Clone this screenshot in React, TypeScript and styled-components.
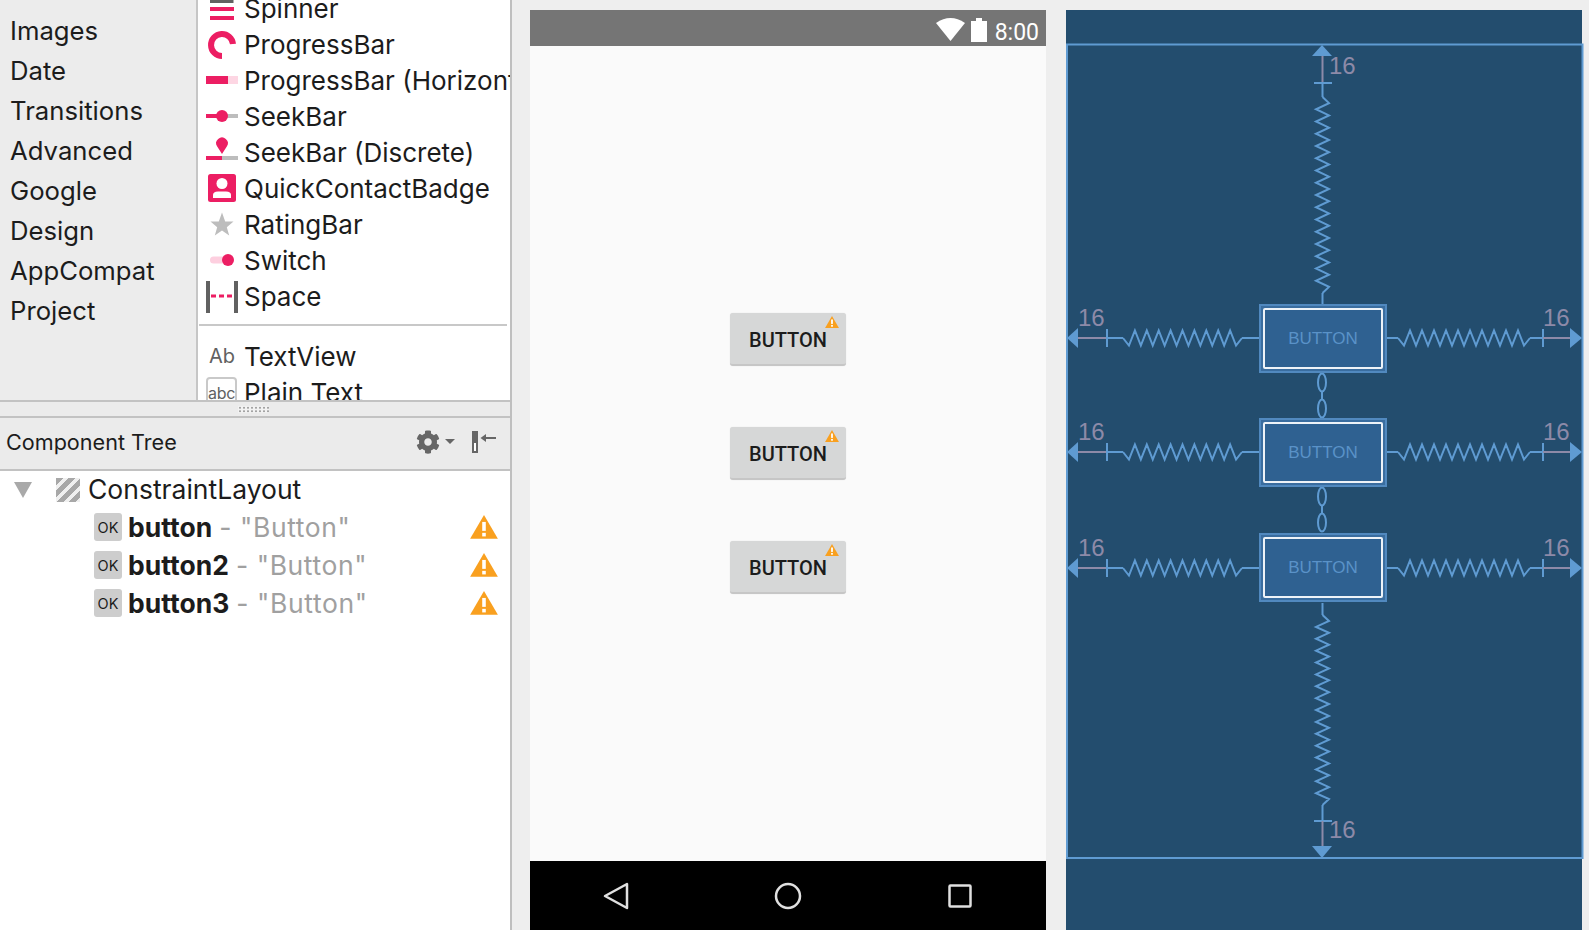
import styled, { createGlobalStyle } from 'styled-components';
import { FaCog } from 'react-icons/fa';

const PINK = '#ec1e63';
const LINE = '#5f9bd2';
const DIM = '#8d8aa8';

const GlobalStyle = createGlobalStyle`
  html, body {
    margin: 0;
    height: 100%;
    overflow: hidden;
    background: #eeeeee;
  }
`;

const Page = styled.div`
  display: flex;
  width: 1589px;
  height: 930px;
  background: #eeeeee;
  font-family: Inter, "Liberation Sans", sans-serif;
  color: #1c1c1c;
`;

const LeftPane = styled.div`
  display: flex;
  flex-direction: column;
  width: 510px;
  flex: none;
  border-right: 2px solid #bfbfbf;
  background: #fff;
`;

const PaletteArea = styled.div`
  display: flex;
  height: 400px;
  flex: none;
  overflow: hidden;
`;

const Categories = styled.div`
  width: 196px;
  flex: none;
  margin-top: -29px;
  background: #ececec;
  border-right: 2px solid #c6c6c6;
`;

const Category = styled.div`
  box-sizing: border-box;
  display: flex;
  align-items: center;
  height: 40px;
  padding: 0 0 2px 10px;
  font-size: 25.7px;
  white-space: nowrap;
`;

const Palette = styled.div`
  flex: 1;
  min-width: 0;
  margin-top: -9px;
  background: #fff;
  overflow: hidden;
`;

const PaletteRow = styled.div`
  box-sizing: border-box;
  display: flex;
  align-items: center;
  gap: 6px;
  height: 36px;
  padding: 0 0 2px 8px;
  font-size: 26px;
  white-space: nowrap;
`;

const PaletteRule = styled.div`
  height: 2px;
  margin: 9px 3px 13px 1px;
  background: #c8c8c8;
`;

const IconBox = styled.svg`
  width: 32px;
  height: 32px;
  flex: none;
  margin-top: 2px;
  overflow: visible;
`;

const AbIcon = styled.span`
  width: 32px;
  flex: none;
  margin-top: -1px;
  text-align: center;
  font-size: 20px;
  color: #616161;
`;

const AbcIcon = styled.span`
  box-sizing: border-box;
  width: 31px;
  height: 32px;
  margin: 2px 1px 0 0;
  flex: none;
  display: flex;
  align-items: center;
  justify-content: center;
  border: 2px solid #c9c9c9;
  border-radius: 4px;
  font-size: 16px;
  letter-spacing: -0.3px;
  color: #616161;
`;

const Splitter = styled.div`
  display: flex;
  justify-content: center;
  align-items: center;
  height: 14px;
  flex: none;
  background: #ebebeb;
  border-top: 2px solid #c2c2c2;
  border-bottom: 2px solid #c2c2c2;
`;

const Grip = styled.span`
  width: 31px;
  height: 7px;
  margin-right: 4px;
  background-color: #f2f2f2;
  background-image: radial-gradient(#a4a4a4 0.8px, transparent 1px);
  background-size: 4px 3.5px;
`;

const TreeHeader = styled.div`
  display: flex;
  align-items: center;
  box-sizing: content-box;
  height: 47px;
  flex: none;
  padding: 0 12px 4px 6px;
  background: #ebebeb;
  border-bottom: 2px solid #c2c2c2;
  font-size: 21.6px;
`;

const TreeTitle = styled.span`
  flex: 1;
`;

const GearButton = styled.span`
  display: flex;
  align-items: center;
  gap: 5px;
  margin-right: 17px;
  color: #666;
`;

const Caret = styled.span`
  width: 0;
  height: 0;
  border-left: 5px solid transparent;
  border-right: 5px solid transparent;
  border-top: 5px solid #666;
`;

const Tree = styled.div`
  flex: 1;
  padding-top: 2px;
  background: #fff;
`;

const RootRow = styled.div`
  box-sizing: border-box;
  display: flex;
  align-items: center;
  height: 34px;
  margin-bottom: 1px;
  padding: 0 0 2px 14px;
  font-size: 26.5px;
`;

const Expander = styled.span`
  width: 0;
  height: 0;
  margin: 2px 24px 0 0;
  border-left: 9px solid transparent;
  border-right: 9px solid transparent;
  border-top: 16px solid #a9a9a9;
`;

const Hatch = styled.span`
  width: 24px;
  height: 24px;
  margin: 2px 8px 0 0;
  background: repeating-linear-gradient(135deg, #a8a8a8 0 5px, #f0f0f0 5px 8.5px);
`;

const ComponentRow = styled.div`
  display: flex;
  align-items: center;
  height: 38px;
  padding: 0 12px 0 94px;
  font-size: 26.5px;
`;

const OkBadge = styled.span`
  display: flex;
  align-items: center;
  justify-content: center;
  width: 28px;
  height: 28px;
  margin-right: 6px;
  border-radius: 3px;
  background: #cdcdcd;
  font-size: 14.5px;
`;

const ComponentName = styled.span`
  font-weight: 700;
`;

const ComponentHint = styled.span`
  margin-left: 7px;
  letter-spacing: 0.6px;
  white-space: pre;
  color: #a0a0a0;
`;

const WarnSlot = styled.span`
  display: flex;
  margin-left: auto;
`;

const PhonePane = styled.div`
  display: flex;
  flex-direction: column;
  width: 516px;
  height: 920px;
  flex: none;
  margin: 10px 0 0 18px;
  background: #fafafa;
`;

const StatusBar = styled.div`
  display: flex;
  align-items: center;
  justify-content: flex-end;
  height: 36px;
  padding-right: 7px;
  background: #757575;
  color: #fff;
  font-family: Roboto, sans-serif;
  font-size: 23px;
`;

const WifiIcon = styled.svg`
  margin: 2px 6px 0 0;
`;

const BatteryIcon = styled.svg`
  margin: 4px 8px 0 0;
`;

const StatusTime = styled.span`
  margin-top: 9px;
`;

const Screen = styled.div`
  flex: 1;
  display: flex;
  flex-direction: column;
  align-items: center;
  justify-content: center;
  gap: 61px;
`;

const AndroidButton = styled.div`
  position: relative;
  box-sizing: border-box;
  display: flex;
  align-items: center;
  justify-content: center;
  width: 116px;
  height: 53px;
  padding-top: 2px;
  border-radius: 3px;
  border-bottom: 2px solid #c6c6c6;
  background: #d6d7d7;
  box-shadow: 0 0 1px #d8d8d8;
  font-family: Roboto, sans-serif;
  font-weight: 500;
  font-size: 20px;
  color: #1c1c1c;
`;

const ButtonWarning = styled.span`
  position: absolute;
  top: 3px;
  right: 7px;
  display: flex;
`;

const NavBar = styled.div`
  display: grid;
  grid-template-columns: repeat(3, 172px);
  align-items: center;
  justify-items: center;
  height: 69px;
  background: #000;
`;

const BlueprintPane = styled.div`
  position: relative;
  width: 516px;
  height: 920px;
  flex: none;
  margin: 10px 0 0 20px;
  background: #234d6e;
`;

const BlueprintLines = styled.svg`
  position: absolute;
  inset: 0;
  width: 517px;
  height: 920px;
  overflow: visible;
`;

const BlueprintNode = styled.div<{ $top: number }>`
  position: absolute;
  top: ${p => p.$top}px;
  left: 193px;
  box-sizing: border-box;
  display: flex;
  width: 128px;
  height: 69px;
  padding: 2px;
  border: 2px solid #5189bf;
  background: #3a6d9f;
`;

const BlueprintFace = styled.div`
  flex: 1;
  display: flex;
  align-items: center;
  justify-content: center;
  border: 2px solid #eef3f8;
  border-radius: 2px;
  background: #2f6191;
  font-family: "Liberation Sans", sans-serif;
  font-size: 17px;
  color: #5a92c8;
`;

const DimLabel = styled.span<{ $x: number; $y: number }>`
  position: absolute;
  left: ${p => p.$x}px;
  top: ${p => p.$y}px;
  font-family: "Liberation Sans", sans-serif;
  font-size: 24px;
  line-height: 24px;
  color: ${DIM};
`;

const zigzag = (from: number, to: number, cross: number, periods: number, amp: number, vertical: boolean) => {
  const pts: string[] = [];
  const step = (to - from) / (periods * 2);
  for (let i = 0; i <= periods * 2; i++) {
    const along = from + step * i;
    let off = 0;
    if (i > 0 && i < periods * 2) off = i % 2 ? amp : -amp;
    pts.push(vertical ? `${cross + off},${along}` : `${along},${cross + off}`);
  }
  return pts.join(' ');
};

const Warning = ({ size }: { size: number }) => (
  <svg width={size} height={size * 0.85} viewBox="0 0 28 24">
    <path d="M14 0 L28 24 L0 24 Z" fill="#f9a01f" />
    <rect x="12.2" y="7" width="3.6" height="9" fill="#fff" />
    <rect x="12.2" y="18" width="3.6" height="3.6" fill="#fff" />
  </svg>
);

const SpinnerIcon = () => (
  <IconBox viewBox="0 0 32 32">
    <path d="M4 8.5 H26 V5" fill="none" stroke="#616161" strokeWidth="3" />
    <rect x="4" y="14" width="24" height="4" fill={PINK} />
    <rect x="4" y="23" width="24" height="4" fill={PINK} />
  </IconBox>
);

const ProgressIcon = () => (
  <IconBox viewBox="0 0 32 32">
    <path d="M27 15 A11 11 0 1 0 16 27" fill="none" stroke={PINK} strokeWidth="6" />
  </IconBox>
);

const HorizontalIcon = () => (
  <IconBox viewBox="0 0 32 32">
    <rect x="0" y="11" width="22" height="8" fill={PINK} />
    <rect x="22" y="11" width="10" height="8" fill="#fdd6e3" />
  </IconBox>
);

const SeekIcon = () => (
  <IconBox viewBox="0 0 32 32">
    <rect x="0" y="13" width="16" height="4" fill={PINK} />
    <rect x="16" y="13" width="16" height="4" fill="#bdbdbd" />
    <circle cx="16" cy="15" r="6" fill={PINK} />
  </IconBox>
);

const DiscreteIcon = () => (
  <IconBox viewBox="0 0 32 32">
    <rect x="0" y="19" width="16" height="4" fill={PINK} />
    <rect x="16" y="19" width="16" height="4" fill="#bdbdbd" />
    <path d="M16 17 L11.2 9.5 A5.8 5.8 0 1 1 20.8 9.5 Z" fill={PINK} />
  </IconBox>
);

const BadgeIcon = () => (
  <IconBox viewBox="0 0 32 32">
    <rect x="2" y="1" width="28" height="28" rx="2.5" fill={PINK} />
    <circle cx="16" cy="10.5" r="5.5" fill="#fff" />
    <path d="M7 25 V22 Q7 18.5 12 18.5 H20 Q25 18.5 25 22 V25 Z" fill="#fff" />
  </IconBox>
);

const StarIcon = () => (
  <IconBox viewBox="0 0 32 32">
    <path d="M16 3.5 L19.2 12.6 L27.5 12.6 L20.8 18.3 L23.2 26.5 L16 21.6 L8.8 26.5 L11.2 18.3 L4.5 12.6 L12.8 12.6 Z" fill="#bdbdbd" />
  </IconBox>
);

const SwitchIcon = () => (
  <IconBox viewBox="0 0 32 32">
    <rect x="4" y="11.5" width="22" height="7" rx="3.5" fill="#fdcfdf" />
    <circle cx="22" cy="15" r="6" fill={PINK} />
  </IconBox>
);

const SpaceIcon = () => (
  <IconBox viewBox="0 0 32 32">
    <rect x="0" y="0" width="4" height="32" fill="#616161" />
    <rect x="28" y="0" width="4" height="32" fill="#616161" />
    <path d="M5 15 H27" stroke={PINK} strokeWidth="3" strokeDasharray="5 3" />
  </IconBox>
);

const CollapseIcon = () => (
  <svg width="26" height="24" viewBox="0 0 26 24">
    <rect x="0" y="1" width="6" height="22" fill="#666" />
    <rect x="2" y="13" width="2" height="8" fill="#fff" />
    <path d="M8.5 8 L14 4 V7 H24 V9 H14 V12 Z" fill="#666" />
  </svg>
);

const paletteItems = [
  { label: 'Spinner', icon: <SpinnerIcon /> },
  { label: 'ProgressBar', icon: <ProgressIcon /> },
  { label: 'ProgressBar (Horizontal)', icon: <HorizontalIcon /> },
  { label: 'SeekBar', icon: <SeekIcon /> },
  { label: 'SeekBar (Discrete)', icon: <DiscreteIcon /> },
  { label: 'QuickContactBadge', icon: <BadgeIcon /> },
  { label: 'RatingBar', icon: <StarIcon /> },
  { label: 'Switch', icon: <SwitchIcon /> },
  { label: 'Space', icon: <SpaceIcon /> },
];

const categories = ['Containers', 'Images', 'Date', 'Transitions', 'Advanced', 'Google', 'Design', 'AppCompat', 'Project'];
const treeButtons = ['button', 'button2', 'button3'];

// page coordinates minus pane origin (1066, 10)
const rows = [
  { center: 328, nodeTop: 294, labelTop: 296 },
  { center: 442, nodeTop: 408, labelTop: 410 },
  { center: 558, nodeTop: 523, labelTop: 526 },
];

const Blueprint = () => (
  <BlueprintPane>
    <BlueprintLines viewBox="0 0 517 920">
      <rect x="1" y="34.5" width="515.5" height="813.5" fill="none" stroke={LINE} strokeWidth="2" />

      <path d="M256.5 46 V73" stroke={DIM} strokeWidth="2" />
      <path d="M248 73 H266 M256.5 73 V87" stroke={LINE} strokeWidth="2" fill="none" />
      <polygon points="256,35 246,46 266,46" fill={LINE} />
      <polyline points={zigzag(87, 283, 256.5, 16, 6.5, true)} fill="none" stroke={LINE} strokeWidth="2" />
      <path d="M256.5 283 V294" stroke={LINE} strokeWidth="2" />

      <path d="M256.5 593 V605" stroke={LINE} strokeWidth="2" />
      <polyline points={zigzag(605, 795, 256.5, 16, 6.5, true)} fill="none" stroke={LINE} strokeWidth="2" />
      <path d="M256.5 795 V811 M248 811 H266" stroke={LINE} strokeWidth="2" fill="none" />
      <path d="M256.5 811 V836" stroke={DIM} strokeWidth="2" />
      <polygon points="256,848 246,836 266,836" fill={LINE} />

      {[363, 477].map(y => (
        <g key={y} fill="none" stroke={LINE} strokeWidth="2">
          <ellipse cx="256" cy={y + 9.5} rx="4" ry="9" />
          <ellipse cx="256" cy={y + 35.5} rx="4" ry="9" />
          <path d={`M256 ${y + 18} V${y + 27}`} />
        </g>
      ))}

      {rows.map(r => (
        <g key={r.center}>
          <path d={`M12 ${r.center} H41`} stroke={DIM} strokeWidth="2" />
          <path d={`M41 ${r.center - 9} V${r.center + 9} M41 ${r.center} H57`} stroke={LINE} strokeWidth="2" fill="none" />
          <polygon points={`1,${r.center} 12,${r.center - 10} 12,${r.center + 10}`} fill={LINE} />
          <polyline points={zigzag(57, 176, r.center, 10, 7.5, false)} fill="none" stroke={LINE} strokeWidth="2" />
          <path d={`M176 ${r.center} H193 M321 ${r.center} H332`} stroke={LINE} strokeWidth="2" fill="none" />
          <polyline points={zigzag(332, 464, r.center, 11, 7.5, false)} fill="none" stroke={LINE} strokeWidth="2" />
          <path d={`M464 ${r.center} H477 M477 ${r.center - 9} V${r.center + 9}`} stroke={LINE} strokeWidth="2" fill="none" />
          <path d={`M477 ${r.center} H504`} stroke={DIM} strokeWidth="2" />
          <polygon points={`516,${r.center} 504,${r.center - 10} 504,${r.center + 10}`} fill={LINE} />
        </g>
      ))}
    </BlueprintLines>

    {rows.map(r => (
      <BlueprintNode key={r.nodeTop} $top={r.nodeTop}>
        <BlueprintFace>BUTTON</BlueprintFace>
      </BlueprintNode>
    ))}

    <DimLabel $x={263} $y={44}>16</DimLabel>
    <DimLabel $x={263} $y={808}>16</DimLabel>
    {rows.map(r => (
      <span key={r.labelTop}>
        <DimLabel $x={12} $y={r.labelTop}>16</DimLabel>
        <DimLabel $x={477} $y={r.labelTop}>16</DimLabel>
      </span>
    ))}
  </BlueprintPane>
);

const App = () => (
  <>
    <GlobalStyle />
    <Page>
      <LeftPane>
        <PaletteArea>
          <Categories>
            {categories.map(c => (
              <Category key={c}>{c}</Category>
            ))}
          </Categories>
          <Palette>
            {paletteItems.map(item => (
              <PaletteRow key={item.label}>
                {item.icon}
                {item.label}
              </PaletteRow>
            ))}
            <PaletteRule />
            <PaletteRow>
              <AbIcon>Ab</AbIcon>
              TextView
            </PaletteRow>
            <PaletteRow>
              <AbcIcon>abc</AbcIcon>
              Plain Text
            </PaletteRow>
          </Palette>
        </PaletteArea>
        <Splitter>
          <Grip />
        </Splitter>
        <TreeHeader>
          <TreeTitle>Component Tree</TreeTitle>
          <GearButton>
            <FaCog size={24} />
            <Caret />
          </GearButton>
          <CollapseIcon />
        </TreeHeader>
        <Tree>
          <RootRow>
            <Expander />
            <Hatch />
            ConstraintLayout
          </RootRow>
          {treeButtons.map(name => (
            <ComponentRow key={name}>
              <OkBadge>OK</OkBadge>
              <ComponentName>{name}</ComponentName>
              <ComponentHint>- "Button"</ComponentHint>
              <WarnSlot>
                <Warning size={28} />
              </WarnSlot>
            </ComponentRow>
          ))}
        </Tree>
      </LeftPane>

      <PhonePane>
        <StatusBar>
          <WifiIcon width="29" height="24" viewBox="0 0 29 24">
            <path d="M0 6 Q14.5 -4 29 6 L14.5 24 Z" fill="#fff" />
          </WifiIcon>
          <BatteryIcon width="16" height="24" viewBox="0 0 16 24">
            <path d="M0 3 H5 V0 H11 V3 H16 V24 H0 Z" fill="#fff" />
          </BatteryIcon>
          <StatusTime>8:00</StatusTime>
        </StatusBar>
        <Screen>
          {[0, 1, 2].map(i => (
            <AndroidButton key={i}>
              BUTTON
              <ButtonWarning>
                <Warning size={14} />
              </ButtonWarning>
            </AndroidButton>
          ))}
        </Screen>
        <NavBar>
          <svg width="26" height="28" viewBox="0 0 26 28">
            <path d="M2 14 L24 2 V26 Z" fill="none" stroke="#e0e0e0" strokeWidth="2.5" strokeLinejoin="round" />
          </svg>
          <svg width="28" height="28" viewBox="0 0 28 28">
            <circle cx="14" cy="14" r="12" fill="none" stroke="#e0e0e0" strokeWidth="2.5" />
          </svg>
          <svg width="24" height="24" viewBox="0 0 24 24">
            <rect x="1.5" y="1.5" width="21" height="21" rx="1" fill="none" stroke="#e0e0e0" strokeWidth="2.5" />
          </svg>
        </NavBar>
      </PhonePane>

      <Blueprint />
    </Page>
  </>
);

export default App;
